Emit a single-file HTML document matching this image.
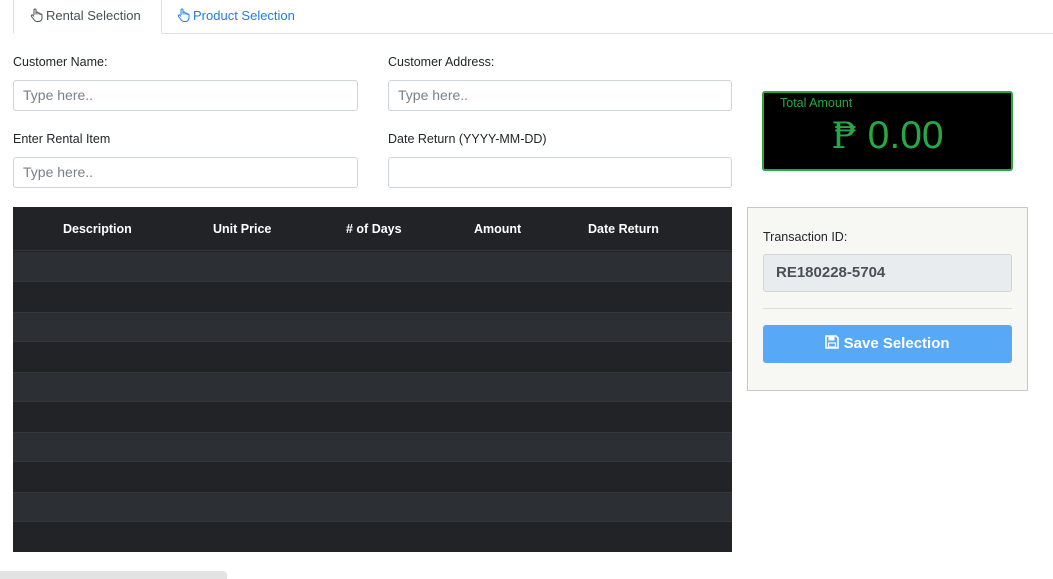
<!DOCTYPE html>
<html><head><style>
*{box-sizing:border-box;margin:0;padding:0}
body{width:1053px;height:579px;background:#fff;font-family:"Liberation Sans",sans-serif;color:#212529;position:relative;overflow:hidden;font-size:13px}
.abs{position:absolute}
.tabline{left:13px;right:0;top:33px;height:1px;background:#dee2e6}
.tab1{left:13px;top:0;width:149px;height:34px;border:1px solid #dee2e6;border-top:none;border-bottom:1px solid #fff;background:#fff;font-size:13px;line-height:31px;padding-left:16px;color:#495057}
.tab2{left:177px;top:0;line-height:31px;color:#1e7cf0;font-size:13px}
.lbl{font-size:12.5px;color:#212529}
.inp{height:31px;border:1px solid #ced4da;border-radius:3px;font-size:14px;color:#7a8088;padding-left:9px;line-height:29px}
.hand{display:inline-block;vertical-align:-2px;margin-right:3px}
</style></head><body>
<div class="abs tabline"></div>
<div class="abs tab1"><svg class="hand" width="13" height="14" viewBox="0 0 13 14"><path d="M4 7V2a1 1 0 0 1 2 0v4.5V5a1 1 0 0 1 2 0v1.5V6a1 1 0 0 1 2 0v1a1 1 0 0 1 2 0v3c0 2-1.5 3.5-3.5 3.5H7C5.5 13.5 4.5 12.5 3.5 11L1.5 8.5a1 1 0 0 1 1.5-1.3L4 8.5" fill="none" stroke="#495057" stroke-width="1"/></svg>Rental Selection</div>
<div class="abs tab2"><svg class="hand" width="13" height="14" viewBox="0 0 13 14"><path d="M4 7V2a1 1 0 0 1 2 0v4.5V5a1 1 0 0 1 2 0v1.5V6a1 1 0 0 1 2 0v1a1 1 0 0 1 2 0v3c0 2-1.5 3.5-3.5 3.5H7C5.5 13.5 4.5 12.5 3.5 11L1.5 8.5a1 1 0 0 1 1.5-1.3L4 8.5" fill="none" stroke="#1e7cf0" stroke-width="1"/></svg>Product Selection</div>

<div class="abs lbl" style="left:13px;top:55px">Customer Name:</div>
<div class="abs inp" style="left:13px;top:80px;width:345px">Type here..</div>
<div class="abs lbl" style="left:388px;top:55px">Customer Address:</div>
<div class="abs inp" style="left:388px;top:80px;width:344px">Type here..</div>
<div class="abs lbl" style="left:13px;top:132px">Enter Rental Item</div>
<div class="abs inp" style="left:13px;top:157px;width:345px">Type here..</div>
<div class="abs lbl" style="left:388px;top:132px">Date Return (YYYY-MM-DD)</div>
<div class="abs inp" style="left:388px;top:157px;width:344px"></div>

<div class="abs" style="left:762px;top:91px;width:251px;height:80px;background:#000;border:2px solid #28a745;border-radius:3px">
<div class="abs" style="left:16px;top:3px;color:#28a745;font-size:12.5px">Total Amount</div>
<div class="abs" style="left:0;right:0;top:20px;text-align:center;color:#28a745;font-size:39px;line-height:46px"><span style="font-family:'DejaVu Serif',serif;font-size:36px">₱</span> 0.00</div>
</div>

<div class="abs" style="left:13px;top:207px;width:719px;height:345px;background:#212327">
<div class="abs" style="left:0;top:0;width:719px;height:44px;border-bottom:1px solid #32363b"></div>
<div class="abs" style="left:50px;top:15px;color:#fff;font-weight:bold;font-size:12.5px">Description</div>
<div class="abs" style="left:200px;top:15px;color:#fff;font-weight:bold;font-size:12.5px">Unit Price</div>
<div class="abs" style="left:333px;top:15px;color:#fff;font-weight:bold;font-size:12.5px"># of Days</div>
<div class="abs" style="left:461px;top:15px;color:#fff;font-weight:bold;font-size:12.5px">Amount</div>
<div class="abs" style="left:575px;top:15px;color:#fff;font-weight:bold;font-size:12.5px">Date Return</div>
<div class="abs" style="left:0;top:45px;width:719px;height:30px;background:#2c2f33;border-bottom:1px solid #35383d"></div>
<div class="abs" style="left:0;top:105px;width:719px;height:30px;background:#2c2f33;border-top:1px solid #35383d;border-bottom:1px solid #35383d"></div>
<div class="abs" style="left:0;top:165px;width:719px;height:30px;background:#2c2f33;border-top:1px solid #35383d;border-bottom:1px solid #35383d"></div>
<div class="abs" style="left:0;top:225px;width:719px;height:30px;background:#2c2f33;border-top:1px solid #35383d;border-bottom:1px solid #35383d"></div>
<div class="abs" style="left:0;top:285px;width:719px;height:30px;background:#2c2f33;border-top:1px solid #35383d;border-bottom:1px solid #35383d"></div>
</div>

<div class="abs" style="left:747px;top:207px;width:281px;height:184px;background:#f7f7f3;border:1px solid #c8c8c8">
<div class="abs lbl" style="left:15px;top:22px">Transaction ID:</div>
<div class="abs" style="left:15px;top:46px;width:249px;height:38px;background:#e9ecef;border:1px solid #ced4da;border-radius:3px;font-weight:bold;font-size:15px;color:#495057;line-height:36px;padding-left:12px">RE180228-5704</div>
<div class="abs" style="left:15px;top:100px;width:249px;height:1px;background:#ddd"></div>
<div class="abs" style="left:15px;top:117px;width:249px;height:38px;background:#58a8f8;border-radius:3px;color:#fff;font-weight:bold;font-size:15px;text-align:center;line-height:38px">
<svg width="14" height="14" viewBox="0 0 14 14" style="vertical-align:-1px"><path d="M1 1h10l2 2v10H1z" fill="none" stroke="#fff" stroke-width="1.6"/><rect x="3.5" y="1.5" width="6" height="4" fill="#fff"/><rect x="3.5" y="8" width="7" height="4" fill="none" stroke="#fff" stroke-width="1.2"/></svg> Save Selection</div>
</div>

<div class="abs" style="left:0;top:571px;width:227px;height:8px;background:#e3e3e3;border-radius:0 4px 0 0"></div>
</body></html>
